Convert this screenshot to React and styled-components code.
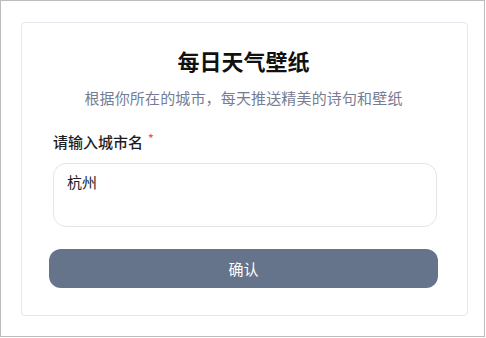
import React from "react";
import styled, { createGlobalStyle } from "styled-components";

const Global = createGlobalStyle`
  * { box-sizing: border-box; }
  html, body { margin: 0; padding: 0; background: #ffffff; }
  body { font-family: "Noto Sans CJK SC", "Noto Sans", sans-serif; }
`;

const Frame = styled.div`
  width: 485px;
  height: 337px;
  border: 1px solid #bcbcbc;
  background: #ffffff;
  padding: 21px 0 0 20px;
`;

const Card = styled.div`
  width: 447px;
  height: 294px;
  border: 1px solid #e6e6ef;
  border-radius: 4px;
  padding: 22px 29px 27px 27px;
  display: flex;
  flex-direction: column;
`;

const Title = styled.h1`
  margin: 0;
  font-size: 22px;
  line-height: 30px;
  font-weight: 700;
  color: #111111;
  text-align: center;
`;

const Subtitle = styled.p`
  margin: 12px 0 0;
  font-size: 15px;
  line-height: 22px;
  letter-spacing: 0.15px;
  color: #767d93;
  text-align: center;
`;

const Field = styled.div`
  margin-top: 22px;
  padding: 0 1px 0 4px;
  display: flex;
  flex-direction: column;
  gap: 10px;
`;

const Label = styled.label`
  font-size: 15px;
  line-height: 22px;
  font-weight: 500;
  color: #1d1d1f;
  display: flex;
  align-items: flex-start;
`;

const Required = styled.span`
  color: #f05252;
  font-size: 12px;
  line-height: 12px;
  margin-left: 5px;
  margin-top: 1px;
`;

const TextArea = styled.textarea`
  display: block;
  width: 100%;
  height: 64px;
  border: 1px solid #e4e4e7;
  border-radius: 13px;
  padding: 7px 13px;
  font-family: "Noto Sans CJK SC", "Noto Sans", sans-serif;
  font-size: 15px;
  line-height: 22px;
  color: #1d1d1f;
  resize: none;
  outline: none;
  background: #ffffff;
`;

const Button = styled.button`
  margin-top: 22px;
  height: 39px;
  width: 100%;
  border: none;
  border-radius: 12px;
  background: #65738b;
  color: #ffffff;
  font-family: "Noto Sans CJK SC", "Noto Sans", sans-serif;
  font-size: 15px;
  font-weight: 400;
  cursor: pointer;
`;

export default function App() {
  return (
    <>
      <Global />
      <Frame>
        <Card>
          <Title>每日天气壁纸</Title>
          <Subtitle>根据你所在的城市，每天推送精美的诗句和壁纸</Subtitle>
          <Field>
            <Label>
              请输入城市名<Required>*</Required>
            </Label>
            <TextArea defaultValue="杭州" />
          </Field>
          <Button>确认</Button>
        </Card>
      </Frame>
    </>
  );
}
